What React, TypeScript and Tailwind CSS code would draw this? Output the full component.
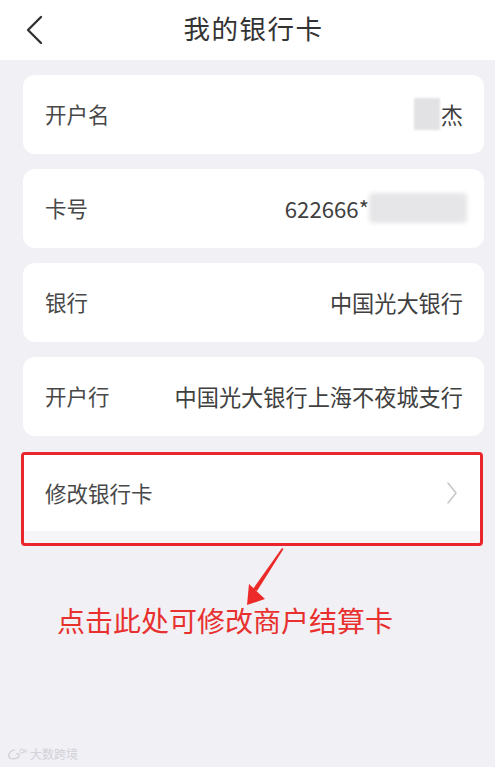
import React from 'react';

const rows = [
  { label: '开户名', value: 'name' },
  { label: '卡号', value: 'card' },
  { label: '银行', value: '中国光大银行' },
  { label: '开户行', value: '中国光大银行上海不夜城支行' },
];

const Value = ({ value }: { value: string }) => {
  if (value === 'name') {
    return (
      <div className="flex items-center">
        <div className="w-[26px] h-[32px] bg-[#e2e2e4] blur-[1px]" />
        <span className="ml-[1px]">杰</span>
      </div>
    );
  }
  if (value === 'card') {
    return (
      <div className="flex items-center">
        <span>622666*</span>
        <div className="w-[98px] h-[30px] -mr-[4px] bg-[#e6e6e8] blur-[2px] rounded-[4px]" />
      </div>
    );
  }
  return <span>{value}</span>;
};

export default function App() {
  return (
    <div
      className="relative min-h-[767px] w-full bg-[#f0f0f5] overflow-hidden"
      style={{ fontFamily: '"Noto Sans CJK SC", "Noto Sans", sans-serif' }}
    >
      {/* header */}
      <div className="h-[60px] bg-white grid grid-cols-[60px_1fr_48px] items-center">
        <div className="flex items-center pl-[24px]">
          <svg width="20" height="30" viewBox="0 0 20 30" fill="none">
            <path d="M17 2 L4 15 L17 28" stroke="#333333" strokeWidth="2.4" strokeLinecap="round" strokeLinejoin="round" />
          </svg>
        </div>
        <div className="text-center text-[26.5px] tracking-[1.5px] text-[#333333] leading-none -mt-[4px]">我的银行卡</div>
        <div />
      </div>

      <div className="pl-[23px] pr-[11px] pt-[15px] flex flex-col">
        <div className="flex flex-col gap-[15px]">
          {rows.map((r) => (
            <div
              key={r.label}
              className="h-[79px] bg-white rounded-[12px] flex items-center justify-between pl-[22px] pr-[21px] text-[#484848]"
            >
              <span className="text-[21.5px]">{r.label}</span>
              <div className="text-[22.2px] text-[#404040]">
                <Value value={r.value} />
              </div>
            </div>
          ))}
        </div>

        {/* highlighted row */}
        <div className="mt-[16px] -ml-[2px] w-[462px] h-[94px] border-[3px] border-[#e8262b] rounded-[4px] overflow-hidden bg-[#f6f6f9]">
          <div className="h-[76px] bg-white flex items-center justify-between pl-[21px] pr-[22px] text-[21.5px] text-[#484848]">
            <span>修改银行卡</span>
            <svg width="12" height="24" viewBox="0 0 12 24" fill="none">
              <path d="M2 2 L10 12 L2 22" stroke="#c8c8cc" strokeWidth="1.6" strokeLinecap="round" strokeLinejoin="round" />
            </svg>
          </div>
        </div>

        {/* annotation */}
        <svg className="block ml-[219px] mt-[1px]" width="45" height="60" viewBox="0 0 45 60" fill="none">
          <path d="M40 1 L41.5 2 L15 44 L11 42 Z" fill="#ec2a2a" />
          <path d="M5 58 L7 37 L23 52 Z" fill="#ec2a2a" />
        </svg>
        <div className="ml-[34px] -mt-[1px] text-[28px] leading-none text-[#e8302f] whitespace-nowrap">
          点击此处可修改商户结算卡
        </div>
      </div>

      {/* watermark */}
      <div className="absolute left-[7px] bottom-[7px] flex items-center gap-[3px] text-[12px] leading-none text-[#d2d2d8]">
        <svg width="20" height="12" viewBox="0 0 20 12" fill="none">
          <path d="M8 2 C3 2 1 6 2 9 C4 12 11 11 12 8 C13 6 11 5 9 6" stroke="#d2d2d8" strokeWidth="1.4" />
          <circle cx="15" cy="3" r="2" stroke="#d2d2d8" strokeWidth="1" />
          <circle cx="18.5" cy="3" r="1.3" stroke="#d2d2d8" strokeWidth="1" />
        </svg>
        <span>大数跨境</span>
      </div>
    </div>
  );
}
